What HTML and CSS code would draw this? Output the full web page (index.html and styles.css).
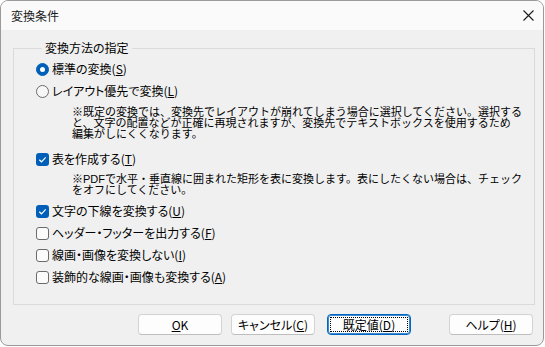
FILE: index.html
```html
<!DOCTYPE html>
<html lang="ja">
<head>
<meta charset="utf-8">
<title>変換条件</title>
<link rel="stylesheet" href="styles.css">
</head>
<body>
<div class="window">
  <div class="titlebar">
    <span class="title">変換条件</span>
    <span class="close">
      <svg width="11" height="11" viewBox="0 0 11 11"><path d="M0.5 0.5 L10.5 10.5 M10.5 0.5 L0.5 10.5" stroke="#1b1b1b" stroke-width="1.1" fill="none"/></svg>
    </span>
  </div>
  <div class="content">
    <fieldset class="group">
      <legend class="group-label">変換方法の指定</legend>
      <div class="option">
        <span class="radio checked"></span>
        <span class="label">標準の変換(<u>S</u>)</span>
      </div>
      <div class="option">
        <span class="radio"></span>
        <span class="label">レイアウト優先で変換(<u>L</u>)</span>
      </div>
      <div class="note note-first">
        <span class="note-line">※既定の変換では、変換先でレイアウトが崩れてしまう場合に選択してください。選択する</span>
        <span class="note-line">と、文字の配置などが正確に再現されますが、変換先でテキストボックスを使用するため</span>
        <span class="note-line">編集がしにくくなります。</span>
      </div>
      <div class="option option-after-note">
        <span class="check checked"><svg width="13" height="13" viewBox="0 0 13 13"><path d="M3.3 6.7 L5.5 8.8 L9.7 4.4" stroke="#fff" stroke-width="1.2" fill="none"/></svg></span>
        <span class="label">表を作成する(<u>T</u>)</span>
      </div>
      <div class="note note-second">
        <span class="note-line">※PDFで水平・垂直線に囲まれた矩形を表に変換します。表にしたくない場合は、チェック</span>
        <span class="note-line">をオフにしてください。</span>
      </div>
      <div class="option option-after-note2">
        <span class="check checked"><svg width="13" height="13" viewBox="0 0 13 13"><path d="M3.3 6.7 L5.5 8.8 L9.7 4.4" stroke="#fff" stroke-width="1.2" fill="none"/></svg></span>
        <span class="label">文字の下線を変換する(<u>U</u>)</span>
      </div>
      <div class="option">
        <span class="check"></span>
        <span class="label">ヘッダー・フッターを出力する(<u>F</u>)</span>
      </div>
      <div class="option">
        <span class="check"></span>
        <span class="label">線画・画像を変換しない(<u>I</u>)</span>
      </div>
      <div class="option">
        <span class="check"></span>
        <span class="label">装飾的な線画・画像も変換する(<u>A</u>)</span>
      </div>
    </fieldset>
    <div class="buttons">
      <button class="btn"><u>O</u>K</button>
      <button class="btn">キャンセル(<u>C</u>)</button>
      <button class="btn btn-default"><span class="focus">既定値(<u>D</u>)</span></button>
      <button class="btn btn-help">ヘルプ(<u>H</u>)</button>
    </div>
  </div>
</div>
</body>
</html>
```
FILE: styles.css
```css
* { box-sizing: border-box; }
html, body {
  margin: 0;
  padding: 0;
  background: #ffffff;
}
body {
  font-family: "Noto Sans CJK JP", "Noto Sans", sans-serif;
  font-size: 12px;
  color: #000;
  font-feature-settings: "palt";
}
.window {
  width: 544px;
  height: 346px;
  border: 1px solid #9a9a9a;
  border-radius: 8px;
  overflow: hidden;
  background: #f0f0f0;
  display: flex;
  flex-direction: column;
}
.titlebar {
  height: 29px;
  background: #fafafa;
  display: flex;
  align-items: center;
  justify-content: space-between;
  padding: 0 9px 0 10px;
  flex-shrink: 0;
}
.title {
  font-size: 12px;
  line-height: 14px;
  color: #1a1a1a;
}
.close {
  display: flex;
  width: 11px;
  height: 11px;
}
.content {
  flex: 1;
  display: flex;
  flex-direction: column;
}
.group {
  margin: 11px 8px 0 12px;
  padding: 3px 0 16px 22px;
  border: 1px solid #dadada;
  min-width: 0;
}
.group-label {
  margin-left: 6px;
  padding: 0 3px;
  line-height: 14px;
  font-size: 12px;
}
.option {
  display: flex;
  align-items: center;
  height: 22px;
  white-space: nowrap;
}
.option-after-note { margin-top: 8px; }
.option-after-note2 { margin-top: 4px; }
.label {
  margin-left: 3px;
  line-height: 14px;
}
.radio {
  width: 13px;
  height: 13px;
  border-radius: 50%;
  border: 1px solid #6b6b6b;
  background: #f7f7f7;
  flex-shrink: 0;
  display: flex;
  align-items: center;
  justify-content: center;
}
.radio.checked {
  border-color: #005fb8;
  background: #005fb8;
}
.radio.checked::after {
  content: "";
  width: 5px;
  height: 5px;
  border-radius: 50%;
  background: #ffffff;
}
.check {
  width: 13px;
  height: 13px;
  border-radius: 3px;
  border: 1px solid #6b6b6b;
  background: #fbfbfb;
  flex-shrink: 0;
  display: flex;
}
.check.checked {
  border: none;
  background: #005fb8;
}
.note {
  display: flex;
  flex-direction: column;
  padding-left: 36px;
  font-family: "Liberation Sans", "Noto Sans CJK JP", sans-serif;
  font-size: 11px;
  white-space: nowrap;
  font-feature-settings: normal;
}
.note-line {
  display: block;
  height: 11px;
  line-height: 11px;
}
.note-first { margin-top: 5px; }
.note-second { margin-top: 4px; }
.buttons {
  display: flex;
  gap: 9px;
  padding: 9px 10px 0 137px;
}
.btn {
  width: 84px;
  height: 21px;
  padding: 0;
  font-family: inherit;
  font-size: 12px;
  font-feature-settings: "palt";
  color: #000;
  background: #fdfdfd;
  border: 1px solid #d3d3d3;
  border-bottom-color: #bdbdbd;
  border-radius: 4px;
  line-height: 14px;
  display: flex;
  align-items: center;
  justify-content: center;
}
.btn-default {
  margin-left: 3px;
  border: 1px solid #0067c0;
  box-shadow: inset 0 0 0 1px #3d8ad0;
  padding: 2px;
}
.focus {
  flex: 1;
  align-self: stretch;
  display: flex;
  align-items: center;
  justify-content: center;
  outline: 1px dotted #000;
  outline-offset: -1px;
}
.btn-help { margin-left: auto; }
```
